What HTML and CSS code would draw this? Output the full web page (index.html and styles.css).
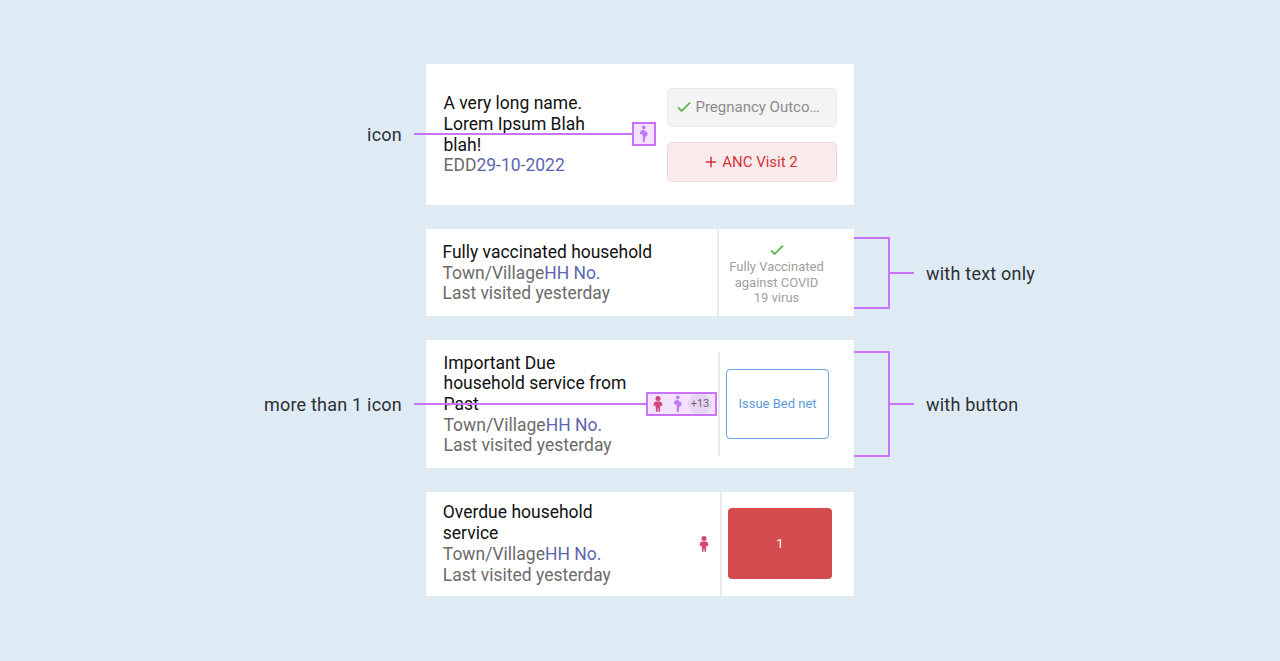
FILE: index.html
```html
<!DOCTYPE html>
<html lang="en">
<head>
<meta charset="utf-8">
<title>Register row columns</title>
<link rel="stylesheet" href="styles.css">
</head>
<body>
<svg class="defs" width="0" height="0" aria-hidden="true">
  <symbol id="pregnant" viewBox="0 0 12 18">
    <circle cx="5.800" cy="2.400" r="1.800"/>
    <path d="M4.200 4.900C5.600 4.300 6.900 4.900 7.200 6.200C9 6.600 9.900 8 9.500 9.600C9.200 11 8.200 11.700 7.200 12L6.600 17.300H4.900L4.700 11.600L4.400 9.800L1.700 8.700L2.200 6.600Z"/>
  </symbol>
  <symbol id="child" viewBox="0 0 12 18">
    <circle cx="6" cy="3.400" r="2.500"/>
    <path d="M4 6.600H8C9.600 6.600 10.300 8.500 10.600 10.200L9.400 11.100L8.400 10.400V12.200H8.100V16.700H6.400V13.200H5.600V16.700H3.900V12.200H3.600V10.400L2.600 11.100L1.400 10.200C1.700 8.500 2.400 6.600 4 6.600Z"/>
  </symbol>
  <symbol id="check" viewBox="0 0 14 12">
    <path d="M1 6.300L4.700 10L13 1.700" fill="none" stroke="#5fb84e" stroke-width="1.800"/>
  </symbol>
</svg>
<main class="board">
  <section class="row row-anc">
    <div class="label label-left">icon</div>
    <article class="card">
      <div class="info"><b>A very long name.<br>Lorem Ipsum Blah<br>blah!</b><br>EDD<i>29-10-2022</i></div>
      <div class="actions">
        <div class="chip chip-done"><svg class="check"><use href="#check"/></svg><span>Pregnancy Outco…</span></div>
        <div class="chip chip-due"><svg class="plus" viewBox="0 0 12 12"><path d="M6 .8V11.200M.8 6H11.200" stroke="#d13438" stroke-width="1.500"/></svg><span>ANC Visit 2</span></div>
      </div>
      <div class="pointer"><span class="line"></span><span class="frame"><svg class="person purple"><use href="#pregnant"/></svg></span></div>
    </article>
  </section>
  <section class="row row-vaccinated">
    <div class="label label-left"></div>
    <article class="card">
      <div class="info"><b>Fully vaccinated household</b><br>Town/Village<i>HH No.</i><br>Last visited yesterday</div>
      <div class="side status"><svg class="check"><use href="#check"/></svg><span>Fully Vaccinated<br>against COVID<br>19 virus</span></div>
    </article>
    <div class="callout"><span class="bracket"></span><span class="stub"></span><span class="label">with text only</span></div>
  </section>
  <section class="row row-due">
    <div class="label label-left">more than 1 icon</div>
    <article class="card">
      <div class="info"><b>Important Due<br>household service from<br>Past</b><br>Town/Village<i>HH No.</i><br>Last visited yesterday</div>
      <div class="side"><div class="button outline">Issue Bed net</div></div>
      <div class="pointer"><span class="line"></span><span class="frame"><svg class="person pink"><use href="#child"/></svg><svg class="person purple"><use href="#pregnant"/></svg><span class="more">+13</span></span></div>
    </article>
    <div class="callout"><span class="bracket"></span><span class="stub"></span><span class="label">with button</span></div>
  </section>
  <section class="row row-overdue">
    <div class="label label-left"></div>
    <article class="card">
      <div class="info"><b>Overdue household<br>service</b><br>Town/Village<i>HH No.</i><br>Last visited yesterday</div>
      <svg class="person pink"><use href="#child"/></svg>
      <div class="side"><div class="button solid">1</div></div>
    </article>
  </section>
</main>
</body>
</html>
```
FILE: styles.css
```css
* { box-sizing: border-box; }
body {
  margin: 0;
  background: #deebf5;
  font-family: Roboto, "Liberation Sans", sans-serif;
}
.defs { position: absolute; }
.board {
  display: flex;
  flex-direction: column;
  gap: 24px;
  height: 661px;
  padding-top: 64px;
}
.row {
  display: grid;
  grid-template-columns: 402px 428px 1fr;
  column-gap: 24px;
  align-items: center;
}
.row-anc { height: 141px; }
.row-vaccinated { height: 87px; }
.row-due { height: 128px; }
.row-overdue { height: 104px; }
.label {
  font-size: 18px;
  line-height: 24px;
  letter-spacing: 0.22px;
  color: #2b2f33;
  white-space: nowrap;
}
.label-left { text-align: right; }
.row-due .label, .row-vaccinated .label { padding-top: 2px; }
.card {
  position: relative;
  display: flex;
  align-items: center;
  height: 100%;
  background: #fff;
}
.info {
  flex: 1;
  padding-left: 17.5px;
  font-size: 17.5px;
  line-height: 20.6px;
  color: #6b6b6b;
  white-space: nowrap;
}
.row-vaccinated .info { padding: 1px 0 0 16.5px; font-size: 17.45px; }
.row-due .info { padding-top: .5px; }
.row-overdue .info { padding-left: 16.8px; line-height: 21px; }
.info b { font-weight: 400; color: #111; }
.info i { font-style: normal; color: #5c66b0; }
.actions {
  display: flex;
  flex-direction: column;
  gap: 15px;
  width: 170px;
  margin-right: 17.5px;
}
.chip {
  display: flex;
  align-items: center;
  justify-content: center;
  height: 39.5px;
  border: 1px solid;
  border-radius: 5px;
  font-size: 15px;
}
.chip-done { gap: 4px; padding-right: 6px; color: #8c8c8c; background: #f4f4f4; border-color: #e8e8e8; }
.chip-due { gap: 5px; color: #d13438; background: #f9ebec; border-color: #f4d5d7; }
.check { width: 14px; height: 12px; }
.plus { width: 12px; height: 12px; }
.side {
  display: flex;
  align-items: center;
  height: 100%;
  border-left: 2px solid #ebebeb;
}
.status {
  flex-direction: column;
  width: 137px;
  padding: 15px 20px 0 0;
  font-size: 13px;
  line-height: 15.5px;
  text-align: center;
  color: #a0a0a0;
}
.status .check { margin-bottom: 3px; }
.row-due .side { width: 136px; height: 104px; padding-left: 6px; }
.row-overdue .side { width: 134px; padding-left: 6px; }
.button {
  display: flex;
  align-items: center;
  justify-content: center;
  height: 70px;
  margin-bottom: 1px;
  border-radius: 4px;
  font-size: 13px;
}
.outline { width: 103px; border: 1px solid #68a6dc; color: #5b9bd5; }
.solid { width: 104px; height: 71px; background: #d44c4e; color: #fff; }
.person { width: 12px; height: 18px; flex: none; }
.row-overdue .person { margin-right: 10.5px; }
.pink { fill: #d2477a; }
.purple { fill: #bd7cf5; }
/* Annotation lines drawn over the cards */
.pointer {
  position: absolute;
  left: -12px;
  top: 50%;
  display: flex;
  align-items: center;
  transform: translateY(-50%);
}
.row-anc .pointer { margin-top: -.5px; }
.line { width: 218px; height: 2px; background: #c973fb; }
.frame {
  display: flex;
  align-items: center;
  justify-content: center;
  width: 24px;
  height: 24px;
  background: #f3e3ff;
  border: 2px solid #c973fb;
}
.row-due .line { width: 232px; }
.row-due .frame { width: 70.5px; justify-content: flex-start; padding-left: 4px; }
.row-due .frame .purple { margin: 0 4px 0 8px; }
.more {
  width: 24px;
  height: 20px;
  border-radius: 10px;
  background: #e6d6f1;
  font-size: 11px;
  line-height: 20px;
  text-align: center;
  color: #6f6178;
}
.callout { display: flex; align-items: center; margin-left: -24px; }
.bracket {
  width: 36px;
  height: 72px;
  border: 2px solid #c973fb;
  border-left: 0;
}
.row-due .bracket { height: 106px; }
.stub { width: 24px; height: 2px; margin-right: 12px; background: #c973fb; }
```
